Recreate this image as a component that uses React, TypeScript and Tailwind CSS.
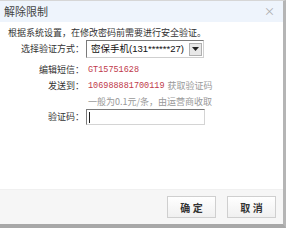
const cjk = "font-['SimSun','Noto_Sans_CJK_SC',sans-serif]";

function Label({ children }: { children: React.ReactNode }) {
  return <div className="w-[84px] shrink-0 text-right text-[9px] text-[#333]">{children}</div>;
}

export default function App() {
  return (
    <div className={`w-[286px] h-[228px] flex flex-col bg-white border-t border-t-[#d6d6d6] border-r-[3px] border-r-[#b5b5b5] border-b-[4px] border-b-[#a8a8a8] ${cjk}`}>
      <div className="h-[21px] shrink-0 flex items-center justify-between bg-[#eef4fc] pl-[4px] pr-[8px]">
        <span className="text-[11px] text-[#444]">解除限制</span>
        <span className="text-[11px] text-[#aaa] leading-none">×</span>
      </div>

      <div className="flex-1 flex flex-col pt-[5px]">
        <div className="pl-[8px] text-[9px] text-[#333] leading-[12px]">根据系统设置，在修改密码前需要进行安全验证。</div>

        <div className="flex items-center mt-[1px]">
          <Label>选择验证方式：</Label>
          <div className="ml-[2px] w-[118px] h-[18px] flex items-center justify-between border border-[#7a7a7a] border-r-[#cfcfcf] border-b-[#cfcfcf] bg-white pl-[4px] pr-[1px]">
            <span className="whitespace-nowrap text-[9.5px] text-[#111] font-['Liberation_Sans','Noto_Sans_CJK_SC',sans-serif] leading-none">密保手机(131******27)</span>
            <span className="w-[13px] h-[13px] flex items-center justify-center bg-[#e8e8e8] border border-[#b0b0b0]">
              <svg width="7" height="5" viewBox="0 0 7 5"><path d="M0 0h7L3.5 4z" fill="#222" /></svg>
            </span>
          </div>
        </div>

        <div className="flex items-center mt-[6px] h-[12px]">
          <Label>编辑短信：</Label>
          <span className="ml-[4px] text-[8.5px] text-[#c0394a] font-['Liberation_Mono',monospace]">GT15751628</span>
        </div>

        <div className="flex items-center mt-[4px] h-[12px]">
          <Label>发送到：</Label>
          <span className="ml-[4px] text-[8.5px] text-[#c0394a] font-['Liberation_Mono',monospace]">106988881700119</span>
          <span className="ml-[3px] text-[9px] text-[#999]">获取验证码</span>
        </div>

        <div className="flex items-center mt-[4px] h-[12px]">
          <div className="w-[84px] shrink-0" />
          <span className="ml-[4px] text-[9px] text-[#999]">一般为0.1元/条，由运营商收取</span>
        </div>

        <div className="flex items-center mt-[1px]">
          <Label>验证码：</Label>
          <div className="ml-[2px] w-[119px] h-[16px] flex items-center border border-[#7a7a7a] border-r-[#d4d4d4] border-b-[#d4d4d4] bg-white pl-[2px]">
            <span className="w-px h-[11px] bg-[#222]" />
          </div>
        </div>
      </div>

      <div className="h-[35px] shrink-0 flex items-center justify-end gap-[11px] bg-[#f6f6f6] border-t border-t-[#f0f0f0] pr-[7px]">
        <button className="w-[49px] h-[22px] border border-[#cfcfcf] bg-gradient-to-b from-white to-[#f0f0f0] text-[10px] font-bold text-[#333]">确 定</button>
        <button className="w-[49px] h-[22px] border border-[#cfcfcf] bg-gradient-to-b from-white to-[#f0f0f0] text-[10px] font-bold text-[#333]">取 消</button>
      </div>
    </div>
  );
}
